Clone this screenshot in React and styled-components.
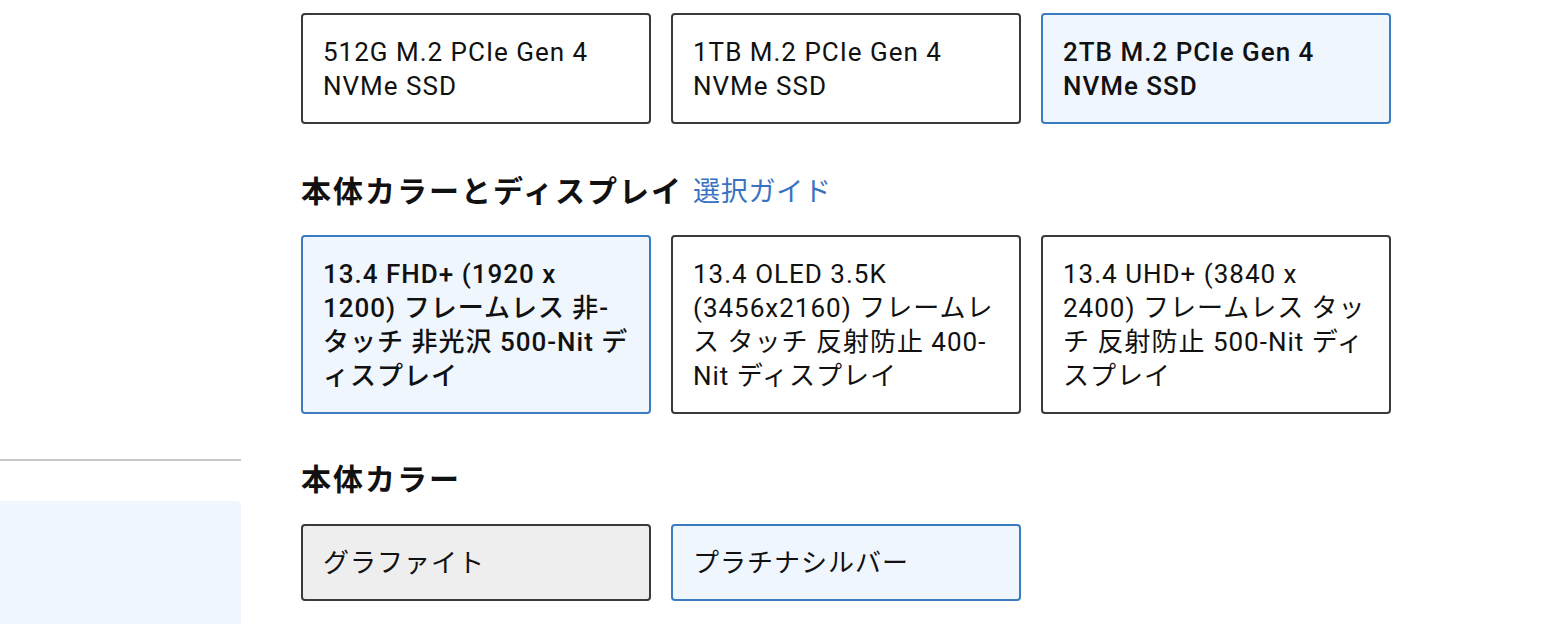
import React from "react";
import styled, { createGlobalStyle } from "styled-components";

const Global = createGlobalStyle`
  html, body { margin: 0; padding: 0; background: #fff; }
  body {
    font-family: Roboto, "Noto Sans CJK JP", sans-serif;
    color: #111;
  }
  #root { height: 624px; overflow: hidden; }
`;

const Page = styled.div`
  display: flex;
  height: 624px;
`;

const Sidebar = styled.aside`
  width: 241px;
  flex-shrink: 0;
  display: flex;
  flex-direction: column;
  padding-top: 459px;
  box-sizing: border-box;
`;

const Divider = styled.div`
  height: 2px;
  background: #c8c8c8;
`;

const SidePanel = styled.div`
  margin-top: 40px;
  flex: 1;
  background: #eff6fe;
  border-top-right-radius: 5px;
`;

const Main = styled.main`
  padding: 13px 0 0 60px;
  display: flex;
  flex-direction: column;
`;

const Section = styled.section`
  display: flex;
  flex-direction: column;
  margin-top: ${(p) => p.$top || 0}px;
`;

const Heading = styled.h2`
  margin: 0 0 ${(p) => p.$gap || 25}px;
  font-family: Roboto, "Noto Sans CJK JP", sans-serif;
  font-size: 30px;
  font-weight: 700;
  line-height: 40px;
  height: 40px;
  letter-spacing: 2px;
  color: #111;
  display: flex;
  align-items: center;
  gap: 10px;
`;

const GuideLink = styled.a`
  font-size: 27px;
  line-height: 40px;
  font-weight: 400;
  letter-spacing: 0.8px;
  color: #3a72c2;
  text-decoration: none;
`;

const Grid = styled.div`
  display: grid;
  grid-template-columns: repeat(3, 350px);
  column-gap: 20px;
  align-items: stretch;
`;

const Card = styled.div`
  box-sizing: border-box;
  font-family: Roboto, "Noto Sans CJK JP", sans-serif;
  font-size: 26px;
  line-height: 34px;
  letter-spacing: 1px;
  padding: 20px 18px 19px 20px;
  color: #111;
  border-radius: 4px;
  border: 2px solid ${(p) => (p.$selected ? "#3b7bc0" : "#3a3a3a")};
  background: ${(p) => (p.$selected ? "#eff6fe" : p.$muted ? "#eeeeee" : "#fff")};
  font-weight: ${(p) => (p.$selected && p.$bold ? 500 : 400)};
  cursor: pointer;
  line-break: strict;
`;

const storage = [
  { label: "512G M.2 PCIe Gen 4 NVMe SSD" },
  { label: "1TB M.2 PCIe Gen 4 NVMe SSD" },
  { label: "2TB M.2 PCIe Gen 4 NVMe SSD", selected: true },
];

const displays = [
  { label: "13.4 FHD+ (1920 x 1200) フレームレス 非-タッチ 非光沢 500-Nit ディスプレイ", selected: true },
  { label: "13.4 OLED 3.5K (3456x2160) フレームレス タッチ 反射防止 400-Nit ディスプレイ" },
  { label: "13.4 UHD+ (3840 x 2400) フレームレス タッチ 反射防止 500-Nit ディスプレイ" },
];

const colors = [
  { label: "グラファイト", muted: true },
  { label: "プラチナシルバー", selected: true },
];

export default function App() {
  return (
    <>
      <Global />
      <Page>
        <Sidebar>
          <Divider />
          <SidePanel />
        </Sidebar>
        <Main>
          <Grid>
            {storage.map((s) => (
              <Card key={s.label} role="button" $selected={s.selected} $bold>
                {s.label}
              </Card>
            ))}
          </Grid>
          <Section $top={48}>
            <Heading $gap={23}>
              本体カラーとディスプレイ
              <GuideLink href="#">選択ガイド</GuideLink>
            </Heading>
            <Grid>
              {displays.map((d) => (
                <Card key={d.label} role="button" $selected={d.selected} $bold>
                  {d.label}
                </Card>
              ))}
            </Grid>
          </Section>
          <Section $top={46}>
            <Heading $gap={24}>本体カラー</Heading>
            <Grid>
              {colors.map((c) => (
                <Card key={c.label} role="button" $selected={c.selected} $muted={c.muted}>
                  {c.label}
                </Card>
              ))}
            </Grid>
          </Section>
        </Main>
      </Page>
    </>
  );
}
